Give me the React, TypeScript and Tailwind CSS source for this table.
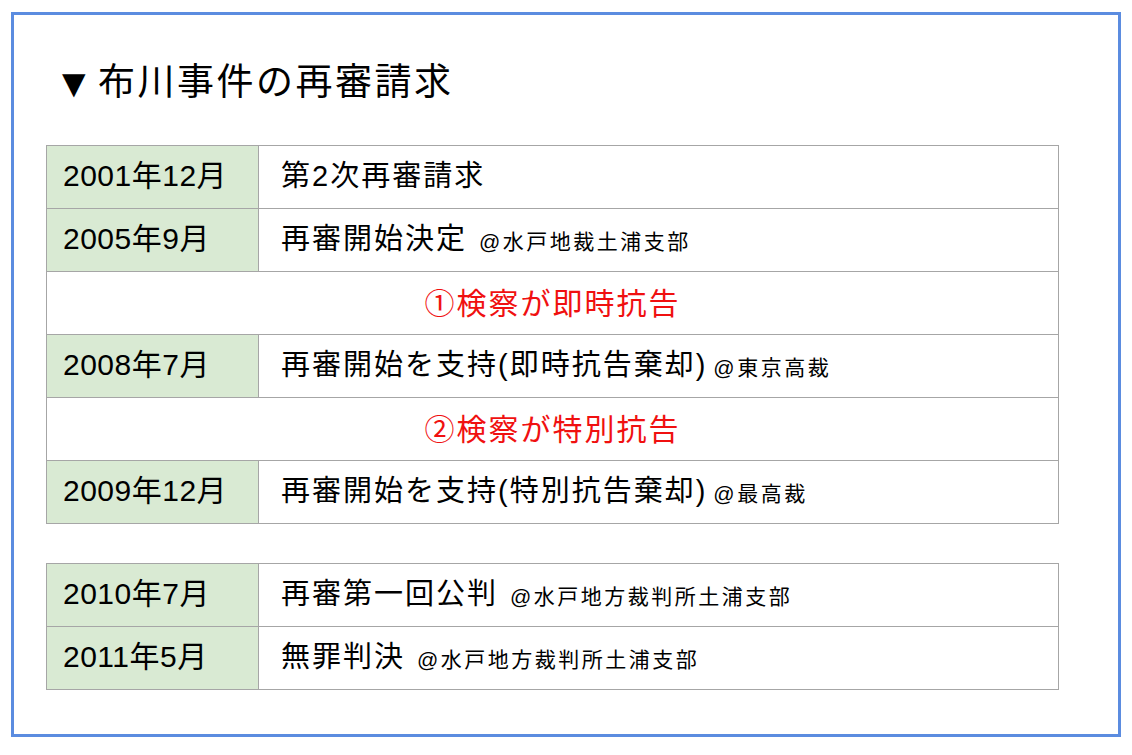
import React from "react";

type Row =
  | { kind: "event"; date: string; text: string; note?: string; gap?: boolean }
  | { kind: "appeal"; text: string };

const first: Row[] = [
  { kind: "event", date: "2001年12月", text: "第2次再審請求" },
  { kind: "event", date: "2005年9月", text: "再審開始決定", note: "@水戸地裁土浦支部", gap: true },
  { kind: "appeal", text: "①検察が即時抗告" },
  { kind: "event", date: "2008年7月", text: "再審開始を支持(即時抗告棄却)", note: "@東京高裁" },
  { kind: "appeal", text: "②検察が特別抗告" },
  { kind: "event", date: "2009年12月", text: "再審開始を支持(特別抗告棄却)", note: "@最高裁" },
];

const second: Row[] = [
  { kind: "event", date: "2010年7月", text: "再審第一回公判", note: "@水戸地方裁判所土浦支部", gap: true },
  { kind: "event", date: "2011年5月", text: "無罪判決", note: "@水戸地方裁判所土浦支部", gap: true },
];

function Table({ rows }: { rows: Row[] }) {
  return (
    <div className="w-[1013px] border-t border-l border-[#a6a6a6]">
      {rows.map((r, i) =>
        r.kind === "appeal" ? (
          <div
            key={i}
            className="h-[63px] flex items-center justify-center border-b border-r border-[#a6a6a6] text-[30px] tracking-[2px] text-[#f01010]"
          >
            {r.text}
          </div>
        ) : (
          <div key={i} className="h-[63px] flex border-b border-r border-[#a6a6a6]">
            <div className="w-[212px] shrink-0 flex items-center pl-[16px] pb-[3px] bg-[#d9ead3] border-r border-[#a6a6a6] text-[30px] tracking-[0.5px] text-black">
              {r.date}
            </div>
            <div className="flex items-center pl-[22px] text-black">
              <span className="text-[29px] tracking-[2px]">{r.text}</span>
              {r.note && (
                <span className={`text-[21px] tracking-[2.5px] mt-[4px] ${r.gap ? "ml-[12px]" : "ml-[6px]"}`}>{r.note}</span>
              )}
            </div>
          </div>
        )
      )}
    </div>
  );
}

export default function App() {
  return (
    <div
      className="w-[1132px] h-[755px] bg-white pt-[12px] pl-[11px]"
      style={{ fontFamily: '"Liberation Sans", "Noto Sans CJK JP", sans-serif' }}
    >
      <div className="w-[1110px] h-[725px] border-[3px] border-[#5b8ce0] px-[32px] pt-[44px]">
        <h1 className="h-[48px] flex items-center text-[37px] tracking-[2.5px] text-black ml-[8px]">
          <span className="text-[40px] mr-[2px]">▼</span>布川事件の再審請求
        </h1>
        <div className="mt-[38px]">
          <Table rows={first} />
        </div>
        <div className="mt-[39px]">
          <Table rows={second} />
        </div>
      </div>
    </div>
  );
}
